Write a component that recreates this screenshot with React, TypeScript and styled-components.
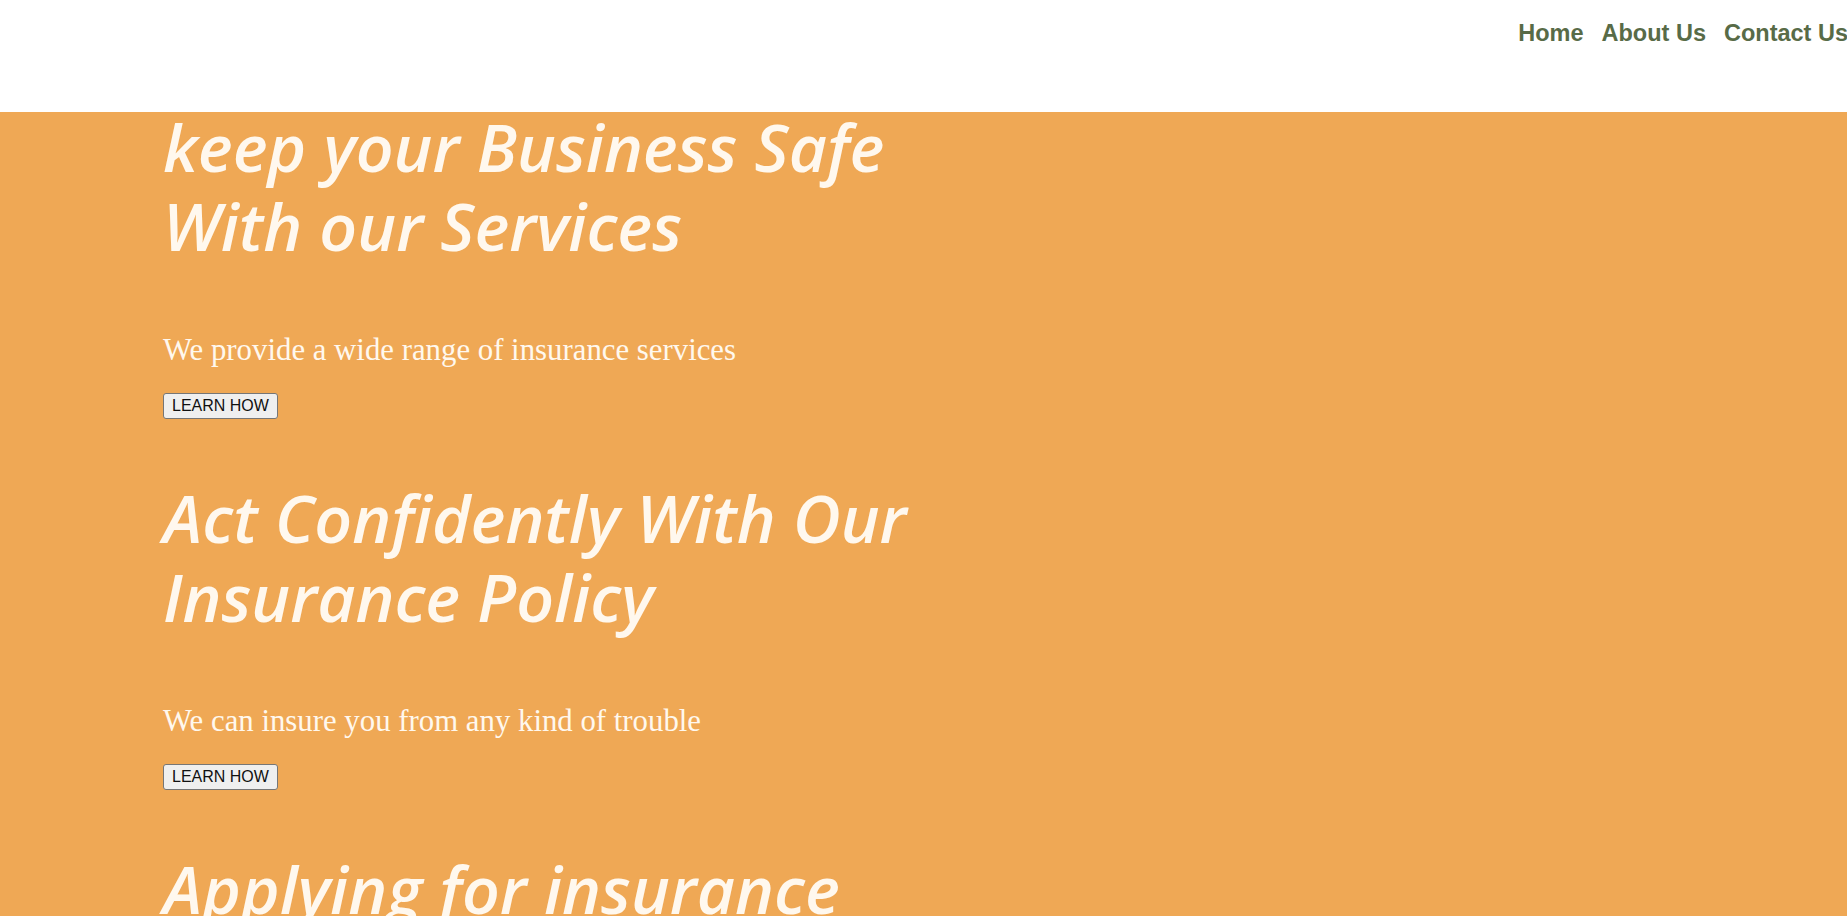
import React from "react";
import styled, { createGlobalStyle } from "styled-components";

const Global = createGlobalStyle`
  html, body { margin: 0; padding: 0; overflow: hidden; }
  body { background: #ffffff; }
`;

const Header = styled.header`
  height: 112px;
  background: #ffffff;
  display: flex;
  justify-content: flex-end;
  align-items: flex-start;
`;

const NavList = styled.ul`
  list-style: none;
  margin: 0 -1px 0 0;
  padding: 19px 0 0 0;
  display: flex;
  gap: 18px;
`;

const NavItem = styled.li`
  font-family: "Liberation Sans", Arial, sans-serif;
  font-weight: 700;
  font-size: 23.5px;
  line-height: 28px;
  color: #586b47;
  white-space: nowrap;
`;

const Main = styled.main`
  background: #efa855;
  padding: 0 0 0 163px;
  min-height: 804px;
`;

const Section = styled.section`
  display: flex;
  flex-direction: column;
  align-items: flex-start;
  padding-bottom: 64px;
`;

const Heading = styled.h1`
  margin: -5px 0 0 0;
  font-family: "Open Sans", Lato, sans-serif;
  font-style: italic;
  font-weight: 600;
  font-size: 66px;
  line-height: 79px;
  color: #fff8ee;
  white-space: nowrap;
`;

const Lead = styled.p`
  margin: 68px 0 26px 0;
  font-family: "Liberation Serif", "Times New Roman", serif;
  font-size: 30.8px;
  line-height: 34px;
  color: #fff8ee;
`;

const Button = styled.button`
  font-family: "Liberation Sans", Arial, sans-serif;
  font-size: 16px;
  line-height: 20px;
  padding: 2px 8px;
  color: #111111;
  background: #efefef;
  border: 1px solid #767676;
  border-radius: 3px;
  cursor: pointer;
`;

const sections = [
  {
    title: ["keep your Business Safe", "With our Services"],
    text: "We provide a wide range of insurance services",
  },
  {
    title: ["Act Confidently With Our", "Insurance Policy"],
    text: "We can insure you from any kind of trouble",
  },
  {
    title: ["Applying for insurance", "Made Easy"],
    text: "Get covered in just a few simple steps",
  },
];

export default function App() {
  return (
    <>
      <Global />
      <Header>
        <nav>
          <NavList>
            <NavItem>Home</NavItem>
            <NavItem>About Us</NavItem>
            <NavItem>Contact Us</NavItem>
          </NavList>
        </nav>
      </Header>
      <Main>
        {sections.map((s) => (
          <Section key={s.text}>
            <Heading>
              {s.title[0]}
              <br />
              {s.title[1]}
            </Heading>
            <Lead>{s.text}</Lead>
            <Button>LEARN HOW</Button>
          </Section>
        ))}
      </Main>
    </>
  );
}
